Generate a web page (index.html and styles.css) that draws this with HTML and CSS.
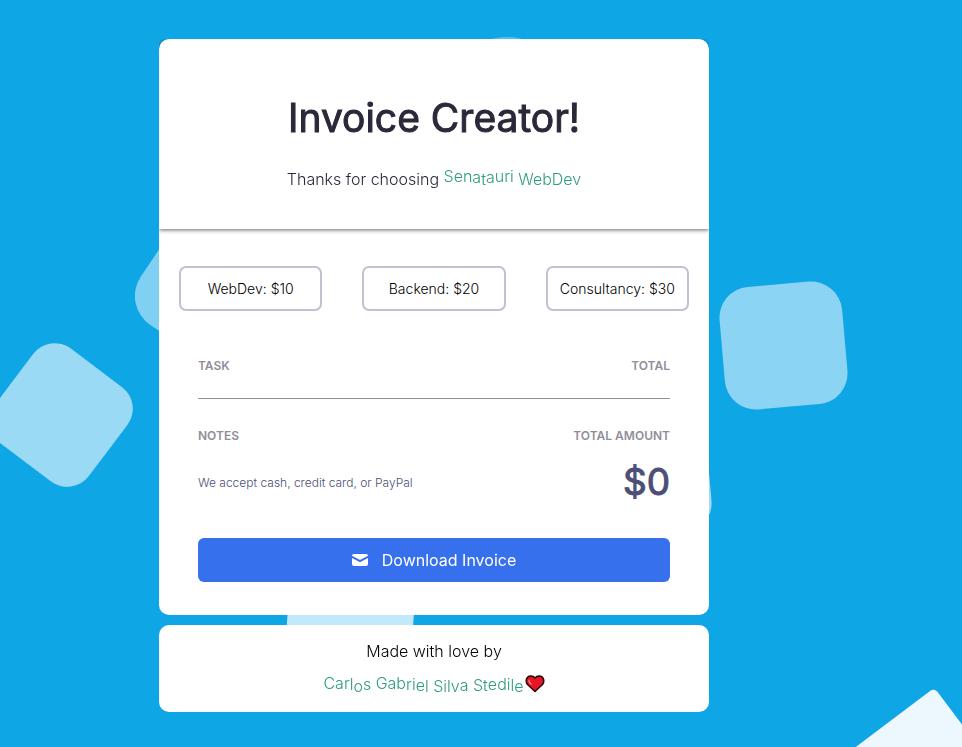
FILE: index.html
```html
<!DOCTYPE html>
<html lang="en">
<head>
<meta charset="utf-8">
<meta name="viewport" content="width=device-width, initial-scale=1">
<title>Invoice Creator</title>
<link rel="stylesheet" href="styles.css">
</head>
<body>
<svg class="backdrop" viewBox="0 0 962 747" preserveAspectRatio="xMidYMid slice" aria-hidden="true">
  <circle cx="507" cy="97" r="60" opacity=".3"/>
  <rect x="145" y="228" width="122" height="122" rx="35" transform="rotate(34 206 289)" opacity=".47"/>
  <rect x="2" y="356" width="118" height="118" rx="27" transform="rotate(37 61 415)" opacity=".58"/>
  <rect x="722" y="284" width="123" height="123" rx="31" transform="rotate(-5 783.5 345.5)" opacity=".52"/>
  <rect x="587" y="414" width="122" height="122" rx="30" transform="rotate(-5 648 475)" opacity=".6"/>
  <rect x="288" y="547" width="126" height="126" rx="20" transform="rotate(4 351 610)" opacity=".75"/>
  <rect x="859" y="713" width="126" height="126" rx="5" transform="rotate(-37 922 776)" opacity=".92"/>
</svg>
<div class="page">
  <main class="card">
    <header class="intro">
      <h1>Invoice Creator!</h1>
      <p>Thanks for choosing <a class="wave" href="#"><span class="u3">Sen</span><span class="u2">a</span><span>t</span><span class="u2">a</span><span class="u3">uri</span> WebDev</a></p>
    </header>
    <div class="services">
      <button type="button">WebDev: $10</button>
      <button type="button">Backend: $20</button>
      <button type="button">Consultancy: $30</button>
    </div>
    <section class="invoice">
      <table>
        <thead><tr><th scope="col">TASK</th><th scope="col">TOTAL</th></tr></thead>
      </table>
      <div class="summary">
        <div>
          <h2>NOTES</h2>
          <p class="note">We accept cash, credit card, or PayPal</p>
        </div>
        <div class="amount">
          <h2>TOTAL AMOUNT</h2>
          <p class="sum">$0</p>
        </div>
      </div>
      <button class="download" type="button">
        <svg viewBox="0 0 16 12" aria-hidden="true"><path d="M2 0h12q2 0 2 1.8L8 6 0 1.8Q0 0 2 0z"/><path d="M0 4l8 4.2L16 4v6q0 2-2 2H2q-2 0-2-2z"/></svg>
        Download Invoice
      </button>
    </section>
  </main>
  <footer class="credit">
    <p>Made with love by</p>
    <p><a class="wave" href="#">Car<span class="d1">l</span><span class="d3">o</span><span class="d1">s</span> Gab<span class="d1">ri</span><span class="d2">e</span><span class="d3">l</span> <span class="d3">Silv</span><span class="d2">a</span> <span class="d2">St</span><span class="d1">edi</span><span class="d2">l</span><span class="d3">e</span></a><svg class="heart" viewBox="0 0 20 18" aria-hidden="true"><path class="heart-body" d="M10 16.5L2.5 9.5Q1 7.5 1.2 5.2Q2 1.2 5.8 1.1Q8.5 1.2 10 3Q11.5 1.2 14.2 1.1Q18 1.2 18.8 5.2Q19 7.5 17.5 9.5z"/><path class="heart-shine" d="M4 5.5q0 2 2 3.5"/></svg></p>
  </footer>
</div>
</body>
</html>
```
FILE: styles.css
```css
* { box-sizing: border-box; }

body {
  margin: 0;
  min-height: 100vh;
  background: #0fa6e6;
  color: #000;
  font: 300 16px/24px Inter, "Liberation Sans", sans-serif;
}

h1, h2, p { margin: 0; }

button { font: inherit; cursor: pointer; }

.backdrop {
  position: fixed;
  inset: 0;
  z-index: -1;
  width: 100%;
  height: 100%;
  fill: #fff;
}

.page {
  display: flex;
  flex-direction: column;
  align-items: center;
  gap: 10px;
  padding: 39px 94px 35px 0;
}

.card, .credit {
  width: 100%;
  max-width: 550px;
  border-radius: 10px;
  background: #fff;
}

.intro {
  padding: 54px 20px 38px;
  border-radius: 10px 10px 0 0;
  box-shadow: 0 1px 4px rgba(0, 0, 0, .6);
  clip-path: inset(0 0 -8px 0);
  color: #2b283a;
  text-align: center;
}

.intro h1 {
  margin-bottom: 24px;
  font-size: 39px;
  font-weight: 400;
  line-height: 50px;
  -webkit-text-stroke: 1px currentColor;
}

.wave { color: #2f9c7e; text-decoration: none; white-space: pre-wrap; }
.wave span { display: inline-block; }
.u3 { transform: translateY(-3px); }
.u2 { transform: translateY(-2px); }
.d1 { transform: translateY(1px); }
.d2 { transform: translateY(2px); }
.d3 { transform: translateY(3px); }

.services {
  display: grid;
  grid-template-columns: repeat(3, 1fr);
  gap: 40px;
  padding: 37px 20px 0;
}

.services button {
  height: 45px;
  padding: 0;
  border: 2px solid #c2c1d2;
  border-radius: 7px;
  background: #fff;
  color: #000;
  font-size: 14px;
  white-space: nowrap;
}

.invoice { padding: 43px 39px 33px; }

table { width: 100%; border-collapse: collapse; border-bottom: 1px solid #8f8e98; }

th, h2 {
  padding: 0;
  color: #918e9b;
  font-size: 12px;
  font-weight: 600;
  line-height: 24px;
  text-align: left;
}

th { padding-bottom: 20px; }
th:last-child { text-align: right; }

.summary {
  display: flex;
  justify-content: space-between;
  padding-top: 25px;
}

.note { margin-top: 23px; color: #4c4f75; font-size: 12px; }

.amount h2 { text-align: right; }

.sum {
  margin-top: 10px;
  color: #4c4f75;
  font-size: 37px;
  font-weight: 400;
  line-height: 48px;
  text-align: right;
  -webkit-text-stroke: 1px currentColor;
}

.download {
  display: flex;
  align-items: center;
  justify-content: center;
  gap: 14px;
  width: 100%;
  height: 44px;
  margin-top: 32px;
  border: 0;
  border-radius: 6px;
  background: #3770ed;
  color: #fff;
  font-weight: 400;
}

.download svg { width: 16px; height: 12px; fill: #fff; }

.credit { padding: 14px 20px 16px; text-align: center; }
.credit p + p { margin-top: 7px; line-height: 26px; }

.heart { width: 20px; height: 18px; margin-left: 1px; vertical-align: -4px; }
.heart-body { fill: #e91423; stroke: #25090c; stroke-width: 1.5; stroke-linejoin: round; }
.heart-shine { fill: none; stroke: #ff7b80; stroke-width: 1.5; stroke-linecap: round; }
```
